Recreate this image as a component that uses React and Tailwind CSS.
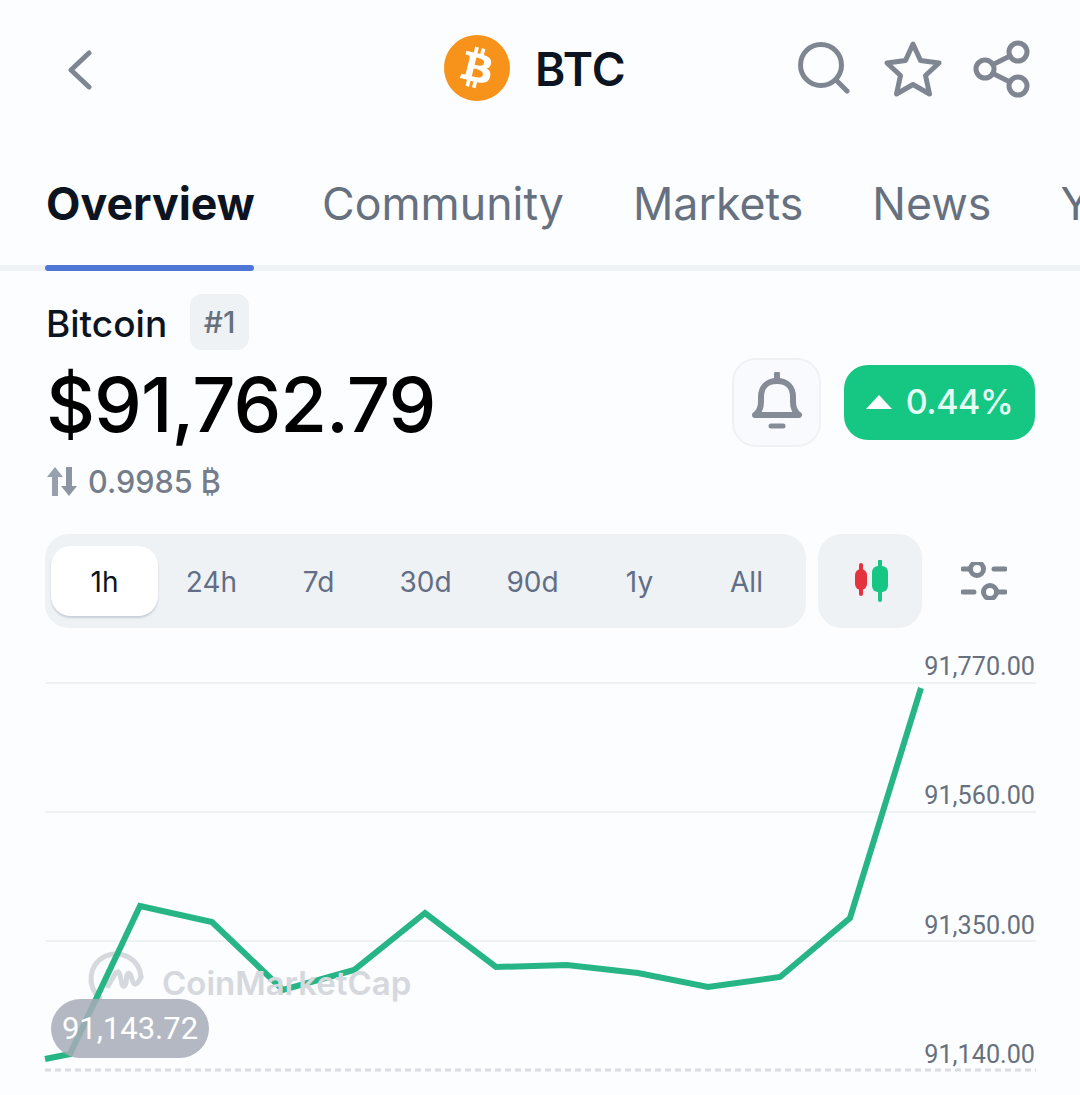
import { FaBitcoin } from 'react-icons/fa'

const tabs = ['Overview', 'Community', 'Markets', 'News', 'Yield']
const ranges = ['1h', '24h', '7d', '30d', '90d', '1y', 'All']
const axisLabels = [
  { text: '91,770.00', top: 'top-[13px]' },
  { text: '91,560.00', top: 'top-[142px]' },
  { text: '91,350.00', top: 'top-[272px]' },
  { text: '91,140.00', top: 'top-[401px]' },
]
// chart line in page x, y relative to the chart box (starts at y 640)
const points = [
  [45, 1059], [70, 1054], [140, 906], [212, 922], [283, 990], [354, 970], [425, 913],
  [496, 967], [567, 965], [638, 973], [708, 987], [780, 977], [850, 918], [921, 688],
].map(([x, y]) => `${x},${y - 640}`).join(' ')

const Icon = ({ w, h, children }) => (
  <svg width={w} height={h} viewBox={`0 0 ${w} ${h}`} fill="none" stroke="#7f8692" strokeWidth="5" strokeLinecap="round" strokeLinejoin="round" className="block shrink-0">
    {children}
  </svg>
)

const Header = () => (
  <div className="flex h-[138px] items-center pb-[2px] pl-[68px]">
    <div className="mt-[4px]">
      <Icon w={24} h={40}>
        <path d="M21 3 L3 20 L21 37" />
      </Icon>
    </div>
    <div className="ml-[351px] flex items-center">
      <div className="relative h-[68px] w-[68px] rounded-full bg-white">
        <FaBitcoin className="h-[68px] w-[68px] text-[#f7931a]" />
      </div>
      <span className="ml-[24px] mt-[2px] text-[46px] font-semibold leading-none text-[#0d1421]">BTC</span>
    </div>
    <div className="ml-[172px] flex items-center">
      <Icon w={52} h={52}>
        <circle cx="23" cy="23" r="20.5" />
        <path d="M38 38 L49 49" />
      </Icon>
      <div className="ml-[33px] mt-[2px]">
        <Icon w={60} h={58}>
          <path d="M30 4 L37.5 20.5 L56 23 L42.5 35.5 L46.5 54 L30 44.5 L13.5 54 L17.5 35.5 L4 23 L22.5 20.5 Z" />
        </Icon>
      </div>
      <div className="ml-[30px] mt-[2px]">
        <Icon w={58} h={58}>
          <circle cx="45" cy="12" r="9" />
          <circle cx="12" cy="29" r="9" />
          <circle cx="45" cy="46" r="9" />
          <path d="M20 24.5 L37 16 M20 33.5 L37 42" />
        </Icon>
      </div>
    </div>
  </div>
)

const Tabs = () => (
  <div className="relative flex h-[133px] gap-[69px] overflow-hidden pl-[46px]">
    <div className="absolute inset-x-0 bottom-0 h-[6px] bg-[#eff2f5]" />
    {tabs.map((tab, i) => (
      <div key={tab} className={`relative flex h-full shrink-0 flex-col pt-[40px] ${i === 0 ? 'w-[207px]' : ''}`}>
        <span className={`text-[44.7px] leading-[52px] ${i === 0 ? 'font-bold text-[#0d1421]' : 'font-normal text-[#67707e]'}`}>
          {tab}
        </span>
        {i === 0 && <div className="absolute bottom-0 -left-px -right-px h-[6px] rounded-full bg-[#4f76d4]" />}
      </div>
    ))}
  </div>
)

const PriceBlock = () => (
  <div className="flex justify-between pl-[46px] pr-[45px]">
    <div>
      <div className="mt-[23px] flex items-center">
        <span className="translate-y-[2px] text-[37px] font-medium leading-[56px] text-[#0d1421]">Bitcoin</span>
        <span className="ml-[23px] flex h-[56px] w-[59px] items-center justify-center rounded-[12px] bg-[#eff2f5] text-[30px] font-medium text-[#67707e]">#1</span>
      </div>
      <div className="mt-[8px] text-[76px] font-medium leading-[92px] tracking-[-1px] text-[#000]">$91,762.79</div>
      <div className="mt-[8px] flex items-center">
        <svg width="32" height="30" viewBox="0 0 32 30" className="block shrink-0">
          <path d="M9 0 L17 10 L12 10 L12 29 L6 29 L6 10 L1 10 Z" fill="#98a0ae" />
          <path d="M23 29 L31 19 L26 19 L26 0 L20 0 L20 19 L15 19 Z" fill="#8d95a3" />
        </svg>
        <span className="ml-[10px] text-[30.6px] font-medium leading-[48px] text-[#767d8a]">0.9985 ₿</span>
      </div>
    </div>
    <div className="mt-[86px] flex h-[90px] items-center">
      <div className="flex h-[89px] w-[89px] items-center justify-center rounded-[24px] border-2 border-[#eff2f5] bg-[#f8fafd]">
        <svg width="54" height="60" viewBox="0 0 54 60" fill="none" className="block">
          <path d="M27 2 V8" stroke="#868b98" strokeWidth="6" strokeLinecap="round" />
          <path d="M5 43 C9 40 11 36 11 30 V25 C11 15 17 9 27 9 C37 9 43 15 43 25 V30 C43 36 45 40 49 43 Z" stroke="#868b98" strokeWidth="6" strokeLinejoin="round" />
          <path d="M21 54 H33" stroke="#868b98" strokeWidth="5" strokeLinecap="round" />
        </svg>
      </div>
      <div className="ml-[23px] flex h-[75px] w-[191px] items-center justify-center rounded-[24px] bg-[#16c784]">
        <svg width="26" height="14" viewBox="0 0 26 14" className="block shrink-0">
          <path d="M13 0 L26 14 H0 Z" fill="#fff" />
        </svg>
        <span className="ml-[14px] text-[34px] font-medium leading-none tracking-[-0.4px] text-[#e6fff5]">0.44%</span>
      </div>
    </div>
  </div>
)

const RangeBar = () => (
  <div className="mt-[28px] flex items-center pl-[45px]">
    <div className="flex h-[94px] w-[761px] items-center rounded-[24px] bg-[#eff2f5] px-[6px]">
      {ranges.map((r, i) => (
        <div
          key={r}
          className={`flex h-[70px] w-[107px] items-center justify-center rounded-[20px] pt-[2px] text-[28px] ${
            i === 0 ? 'bg-white text-[#0d1421] shadow-[0_2px_2px_rgba(88,102,126,0.25)]' : 'font-normal text-[#616e85]'
          }`}
        >
          {r}
        </div>
      ))}
    </div>
    <div className="ml-[12px] flex h-[94px] w-[104px] items-center justify-center rounded-[24px] bg-[#eff2f5] pl-[3px]">
      <svg width="34" height="42" viewBox="0 0 34 42" className="block">
        <path d="M6 5 V34" stroke="#e5323f" strokeWidth="4" strokeLinecap="round" />
        <rect x="0" y="9" width="12" height="21" rx="6" fill="#e5323f" />
        <path d="M25 1 V40" stroke="#16c784" strokeWidth="4" strokeLinecap="round" />
        <rect x="17" y="6" width="16" height="26" rx="6" fill="#16c784" />
      </svg>
    </div>
    <div className="ml-[39px]">
      <svg width="46" height="38" viewBox="0 0 46 38" fill="none" stroke="#7f8692" strokeWidth="5" strokeLinecap="round" className="block">
        <path d="M2 7 H9 M33 7 H44 M2 30 H13 M36 30 H44" />
        <circle cx="16" cy="7" r="6.5" />
        <circle cx="29" cy="30" r="6.5" />
      </svg>
    </div>
  </div>
)

const Chart = () => (
  <div className="relative mt-[12px] h-[455px] w-full overflow-hidden">
    <svg width="1080" height="455" viewBox="0 0 1080 455" fill="none" className="absolute inset-0">
      <g stroke="#eff2f5" strokeWidth="2">
        <path d="M45 43 H1036" />
        <path d="M45 172 H1036" />
        <path d="M45 301 H1036" />
      </g>
      <path d="M45 430 H1036" stroke="#d9dce2" strokeWidth="3" strokeDasharray="6 4" />
      {/* watermark logo */}
      <g stroke="#d5d8dd" strokeWidth="5" strokeLinecap="round" strokeLinejoin="round">
        <path d="M100 358 A25 25 0 1 1 141 337" />
        <path d="M108 346 L115 334 Q118 329 120 335 L122 344 Q124 349 126 343 L127 335 Q129 331 131 336 L133 342 Q136 348 141 337" />
      </g>
      <polyline points={points} stroke="#28b585" strokeWidth="6" strokeLinejoin="miter" />
    </svg>
    <span className="absolute left-[162px] top-[322px] text-[33px] font-semibold leading-[42px] text-[#d5d8dd]">CoinMarketCap</span>
    <div className="absolute left-[51px] top-[359px] flex h-[59px] w-[158px] items-center justify-center rounded-full bg-[#a6acb8]/85 font-['Roboto',sans-serif] text-[31px] leading-none text-white">
      91,143.72
    </div>
    {axisLabels.map((l) => (
      <span key={l.text} className={`absolute right-[45px] font-['Roboto',sans-serif] text-[25.2px] leading-[28px] text-[#67707e] ${l.top}`}>
        {l.text}
      </span>
    ))}
  </div>
)

const App = () => (
  <div className="h-[1095px] w-[1080px] overflow-hidden bg-[#fbfdfe] font-['Inter',sans-serif]">
    <Header />
    <Tabs />
    <PriceBlock />
    <RangeBar />
    <Chart />
  </div>
)

export default App
